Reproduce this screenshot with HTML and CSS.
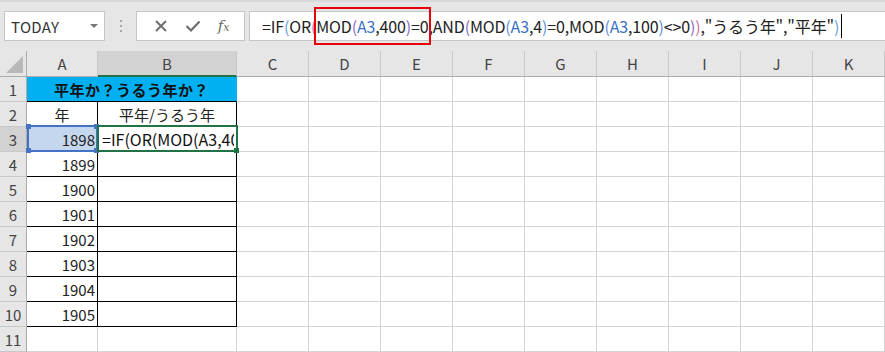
FILE: index.html
```html
<!DOCTYPE html>
<html lang="ja">
<head>
<meta charset="utf-8">
<title>Excel</title>
<link rel="stylesheet" href="styles.css">
</head>
<body>
<div class="toolbar">
  <div class="namebox"><span class="nb-text">TODAY</span><span class="caret"></span></div>
  <div class="grip"><i></i><i></i><i></i></div>
  <div class="fbtns">
    <svg class="ico" width="14" height="14" viewBox="0 0 14 14"><path d="M2 2 L12 12 M12 2 L2 12" stroke="#6b6b6b" stroke-width="1.8" fill="none"/></svg>
    <svg class="ico" width="16" height="14" viewBox="0 0 16 14"><path d="M1.5 7 L6 11.5 L14.5 2.5" stroke="#6b6b6b" stroke-width="2.2" fill="none"/></svg>
    <span class="fx">f<span class="fx-sub">x</span></span>
  </div>
  <div class="fbar">
    <span class="ftext">=IF<span class="p1">(</span>OR<span class="p2">(</span><span class="mark">MOD<span class="p3">(</span><span class="ref">A3</span>,400<span class="p3">)</span>=0</span>,AND<span class="p3">(</span>MOD<span class="p4">(</span><span class="ref">A3</span>,4<span class="p4">)</span>=0,MOD<span class="p4">(</span><span class="ref">A3</span>,100<span class="p4">)</span>&lt;&gt;0<span class="p3">)</span><span class="p2">)</span>,"うるう年","平年"<span class="p1">)</span></span><span class="cursor"></span>
  </div>
</div>
<div class="sheet">
  <div class="corner"><span class="tri"></span></div>
  <div class="ch">A</div><div class="ch sel">B</div><div class="ch">C</div><div class="ch">D</div><div class="ch">E</div><div class="ch">F</div><div class="ch">G</div><div class="ch">H</div><div class="ch">I</div><div class="ch">J</div><div class="ch">K</div>

  <div class="rh">1</div><div class="title">平年か？うるう年か？</div><div class="c"></div><div class="c"></div><div class="c"></div><div class="c"></div><div class="c"></div><div class="c"></div><div class="c"></div><div class="c"></div><div class="c"></div>

  <div class="rh">2</div><div class="t ctr">年</div><div class="t ctr">平年/うるう年</div><div class="c"></div><div class="c"></div><div class="c"></div><div class="c"></div><div class="c"></div><div class="c"></div><div class="c"></div><div class="c"></div><div class="c"></div>

  <div class="rh rsel">3</div><div class="t num refcell">1898<span class="hl"><i class="h tl"></i><i class="h tr"></i><i class="h bl"></i><i class="h br"></i></span></div><div class="t edit"><span class="edit-text">=IF(OR(MOD(A3,40</span><span class="act"><i class="gh"></i></span></div><div class="c"></div><div class="c"></div><div class="c"></div><div class="c"></div><div class="c"></div><div class="c"></div><div class="c"></div><div class="c"></div><div class="c"></div>

  <div class="rh">4</div><div class="t num">1899</div><div class="t"></div><div class="c"></div><div class="c"></div><div class="c"></div><div class="c"></div><div class="c"></div><div class="c"></div><div class="c"></div><div class="c"></div><div class="c"></div>

  <div class="rh">5</div><div class="t num">1900</div><div class="t"></div><div class="c"></div><div class="c"></div><div class="c"></div><div class="c"></div><div class="c"></div><div class="c"></div><div class="c"></div><div class="c"></div><div class="c"></div>

  <div class="rh">6</div><div class="t num">1901</div><div class="t"></div><div class="c"></div><div class="c"></div><div class="c"></div><div class="c"></div><div class="c"></div><div class="c"></div><div class="c"></div><div class="c"></div><div class="c"></div>

  <div class="rh">7</div><div class="t num">1902</div><div class="t"></div><div class="c"></div><div class="c"></div><div class="c"></div><div class="c"></div><div class="c"></div><div class="c"></div><div class="c"></div><div class="c"></div><div class="c"></div>

  <div class="rh">8</div><div class="t num">1903</div><div class="t"></div><div class="c"></div><div class="c"></div><div class="c"></div><div class="c"></div><div class="c"></div><div class="c"></div><div class="c"></div><div class="c"></div><div class="c"></div>

  <div class="rh">9</div><div class="t num">1904</div><div class="t"></div><div class="c"></div><div class="c"></div><div class="c"></div><div class="c"></div><div class="c"></div><div class="c"></div><div class="c"></div><div class="c"></div><div class="c"></div>

  <div class="rh">10</div><div class="t num">1905</div><div class="t"></div><div class="c"></div><div class="c"></div><div class="c"></div><div class="c"></div><div class="c"></div><div class="c"></div><div class="c"></div><div class="c"></div><div class="c"></div>

  <div class="rh">11</div><div class="c"></div><div class="c"></div><div class="c"></div><div class="c"></div><div class="c"></div><div class="c"></div><div class="c"></div><div class="c"></div><div class="c"></div><div class="c"></div><div class="c"></div>
</div>
</body>
</html>
```
FILE: styles.css
```css
* { box-sizing: border-box; }
html, body { margin: 0; padding: 0; }
body {
  width: 885px;
  height: 352px;
  overflow: hidden;
  background: #ffffff;
  font-family: "Noto Sans CJK JP", "Noto Sans", sans-serif;
  color: #222;
}

/* ---------- toolbar ---------- */
.toolbar {
  height: 51px;
  background: #e6e6e6;
  display: flex;
  align-items: flex-start;
  border-top: 2px solid #d9d9d9;
  padding-top: 9px;
}
.namebox {
  margin-left: 4px;
  width: 101px;
  height: 30px;
  background: #fff;
  border: 1px solid #c6c6c6;
  display: flex;
  align-items: center;
  padding-left: 6px;
  position: relative;
}
.nb-text { font-size: 15px; color: #333; letter-spacing: 0.3px; }
.caret {
  margin-left: auto;
  margin-right: 6px;
  width: 0; height: 0;
  border-left: 4px solid transparent;
  border-right: 4px solid transparent;
  border-top: 4px solid #777;
}
.grip {
  width: 31px;
  height: 30px;
  display: flex;
  flex-direction: column;
  align-items: center;
  justify-content: center;
  gap: 3px;
}
.grip i { display: block; width: 2px; height: 2px; background: #a8a8a8; }
.fbtns {
  width: 109px;
  height: 30px;
  background: #fff;
  border: 1px solid #c6c6c6;
  display: flex;
  align-items: center;
  justify-content: space-around;
  padding: 0 6px 0 8px;
}
.ico { display: block; }
.fx {
  font-family: "DejaVu Serif", "Liberation Serif", serif;
  font-style: italic;
  font-size: 15px;
  color: #6b6b6b;
  line-height: 1;
}
.fx-sub { font-size: 11px; }
.fbar {
  margin-left: 4px;
  flex: 1;
  height: 30px;
  background: #fff;
  border: 1px solid #c6c6c6;
  border-right: none;
  display: flex;
  align-items: center;
  padding-left: 12px;
  white-space: nowrap;
}
.ftext { font-size: 16px; color: #222; letter-spacing: -0.15px; }
.p1 { color: #6aa0d8; }
.p2 { color: #d06fa8; }
.p3 { color: #8c6cc4; }
.p4 { color: #5f8fd6; }
.ref { color: #3b6fc5; }
.mark { position: relative; }
.mark::after {
  content: "";
  position: absolute;
  left: -2px;
  right: -3px;
  top: -7px;
  bottom: -7px;
  border: 2px solid #e8000b;
}
.cursor {
  display: inline-block;
  width: 1px;
  height: 24px;
  background: #000;
  margin-left: 2px;
}

/* ---------- sheet ---------- */
.sheet {
  display: grid;
  grid-template-columns: 27px 71px 139px repeat(9, 72px);
  grid-template-rows: 26px repeat(11, 25px);
  font-size: 15px;
}
.corner {
  background: #e6e6e6;
  border-right: 1px solid #ababab;
  border-bottom: 1px solid #ababab;
  position: relative;
}
.tri {
  position: absolute;
  right: 3px;
  bottom: 3px;
  width: 0; height: 0;
  border-left: 17px solid transparent;
  border-bottom: 17px solid #b8b8b8;
}
.ch {
  background: #e6e6e6;
  border-right: 1px solid #c8c8c8;
  border-bottom: 1px solid #ababab;
  display: flex;
  align-items: center;
  justify-content: center;
  color: #444;
  font-size: 15px;
}
.ch.sel {
  background: #d2d2d2;
  border-bottom: 2px solid #217346;
}
.rh {
  background: #e6e6e6;
  border-right: 1px solid #ababab;
  border-bottom: 1px solid #c8c8c8;
  display: flex;
  align-items: center;
  justify-content: center;
  color: #444;
  font-size: 15px;
}
.rh.rsel { background: #d2d2d2; }
.c {
  border-right: 1px solid #d4d4d4;
  border-bottom: 1px solid #d4d4d4;
}
.title {
  grid-column: span 2;
  background: #00b0f0;
  border-right: 1px solid #00b0f0;
  border-bottom: 1px solid #000;
  display: flex;
  align-items: center;
  justify-content: center;
  font-weight: bold;
  font-size: 15px;
  color: #111;
  letter-spacing: 0.5px;
}
.t {
  border-right: 1px solid #000;
  border-bottom: 1px solid #000;
  display: flex;
  align-items: center;
  padding: 0 2px;
  color: #222;
}
.ctr { justify-content: center; }
.num { justify-content: flex-end; }
.refcell {
  background: #c5d7ee;
  position: relative;
}
.hl {
  position: absolute;
  left: 0; top: -2px; right: -1px; bottom: -1px;
  border: 2px solid #4472c4;
}
.h {
  position: absolute;
  width: 5px; height: 5px;
  background: #4472c4;
}
.tl { left: -3px; top: -3px; }
.tr { right: -3px; top: -3px; }
.bl { left: -3px; bottom: -3px; }
.br { right: -3px; bottom: -3px; }
.edit {
  position: relative;
  overflow: visible;
  padding-left: 4px;
}
.edit-text {
  font-size: 16px;
  color: #111;
  white-space: nowrap;
  overflow: hidden;
  width: 132px;
}
.act {
  position: absolute;
  left: -1px; top: -2px; right: -2px; bottom: -1px;
  border: 2px solid #217346;
}
.gh {
  position: absolute;
  right: -3px;
  bottom: -3px;
  width: 5px; height: 5px;
  background: #217346;
}
```
